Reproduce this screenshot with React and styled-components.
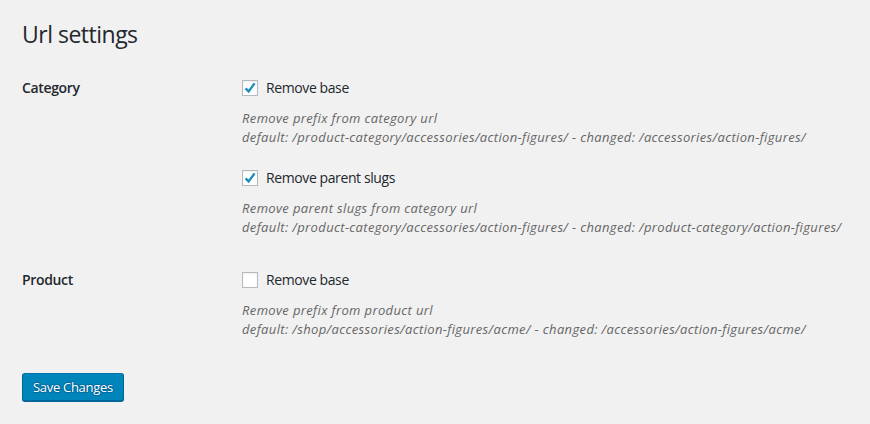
import React from "react"
import styled, { createGlobalStyle } from "styled-components"

const GlobalStyle = createGlobalStyle`
  html, body {
    margin: 0;
    padding: 0;
    background: #f1f1f1;
  }
  body {
    font-family: "Open Sans", "Noto Sans", sans-serif;
    color: #23282d;
    font-size: 14px;
  }
`

const Wrap = styled.div`
  padding: 20px 20px 20px 22px;
`

const Title = styled.h1`
  margin: 0;
  font-size: 23px;
  font-weight: 400;
  line-height: 29px;
  letter-spacing: -0.5px;
  color: #23282d;
`

const Form = styled.form`
  margin-top: 30px;
`

const Row = styled.div`
  display: grid;
  grid-template-columns: 220px 1fr;
  margin-bottom: ${(p) => p.$gap || 0}px;
`

const Label = styled.div`
  font-size: 14px;
  font-weight: 600;
  line-height: 18px;
  letter-spacing: -0.35px;
`

const Fields = styled.div`
  display: flex;
  flex-direction: column;
`

const Option = styled.label`
  display: flex;
  align-items: center;
  gap: 8px;
  height: 18px;
  font-size: 14px;
  line-height: 18px;
  letter-spacing: -0.4px;
  margin-bottom: 11.5px;
`

const Box = styled.span`
  position: relative;
  width: 16px;
  height: 16px;
  box-sizing: border-box;
  border: 1px solid #b4b9be;
  background: #fff;
  box-shadow: inset 0 1px 2px rgba(0, 0, 0, 0.07);
  margin-top: -1px;
  flex: none;

  svg {
    position: absolute;
    left: 0;
    top: 0;
    overflow: visible;
  }
`

const Description = styled.p`
  margin: 0 0 ${(p) => p.$after || 0}px;
  font-size: 13px;
  font-style: italic;
  line-height: 19px;
  letter-spacing: 0.36px;
  color: #666;
`

const Button = styled.button`
  font-family: inherit;
  font-size: 13px;
  letter-spacing: -0.3px;
  height: 28px;
  padding: 0 10px 1px;
  border-radius: 3px;
  border: 1px solid #0073aa;
  border-color: #0073aa #006799 #006799;
  background: #0085ba;
  box-shadow: 0 1px 0 #006799;
  color: #fff;
  text-shadow: 0 -1px 1px #006799, 1px 0 1px #006799, 0 1px 1px #006799,
    -1px 0 1px #006799;
  cursor: pointer;
`

const Check = () => (
  <svg width="14" height="14" viewBox="0 0 14 14">
    <path
      d="M2.6 7.4 L5.6 10.4 L11.6 2.4"
      fill="none"
      stroke="#1e8cbe"
      strokeWidth="2.4"
    />
  </svg>
)

const Checkbox = ({ checked, children }) => (
  <Option>
    <Box>{checked && <Check />}</Box>
    {children}
  </Option>
)

export default function App() {
  return (
    <Wrap>
      <GlobalStyle />
      <Title>Url settings</Title>
      <Form>
        <Row $gap={34.5}>
          <Label>Category</Label>
          <Fields>
            <Checkbox checked>Remove base</Checkbox>
            <Description $after={22.5}>
              Remove prefix from category url
              <br />
              default: /product-category/accessories/action-figures/ - changed:
              /accessories/action-figures/
            </Description>
            <Checkbox checked>Remove parent slugs</Checkbox>
            <Description>
              Remove parent slugs from category url
              <br />
              default: /product-category/accessories/action-figures/ - changed:
              /product-category/action-figures/
            </Description>
          </Fields>
        </Row>
        <Row $gap={34.5}>
          <Label>Product</Label>
          <Fields>
            <Checkbox>Remove base</Checkbox>
            <Description>
              Remove prefix from product url
              <br />
              default: /shop/accessories/action-figures/acme/ - changed:
              /accessories/action-figures/acme/
            </Description>
          </Fields>
        </Row>
        <Button type="button">Save Changes</Button>
      </Form>
    </Wrap>
  )
}
